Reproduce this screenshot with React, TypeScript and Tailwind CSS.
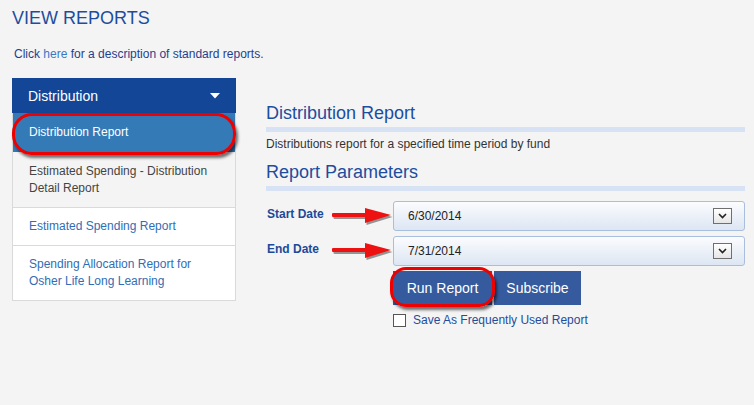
import { useState } from 'react';

const items = [
  { label: 'Estimated Spending - Distribution Detail Report', tone: 'gray' },
  { label: 'Estimated Spending Report', tone: 'link' },
  { label: 'Spending Allocation Report for Osher Life Long Learning', tone: 'link' },
];

function RedArrow() {
  return (
    <svg width="62" height="20" viewBox="0 0 62 20" className="overflow-visible">
      <g transform="translate(1.5,2)" fill="#222" opacity="0.45">
        <rect x="1" y="7" width="37" height="4" rx="1" />
        <polygon points="34,2 60,9 34,17" />
      </g>
      <rect x="1" y="7" width="37" height="4" rx="1" fill="#ee1111" />
      <polygon points="34,2 60,9 34,17" fill="#ee1111" />
    </svg>
  );
}

function DateSelect({ value }: { value: string }) {
  return (
    <div className="flex-1 h-[30px] flex items-center justify-between rounded-[3px] border border-[#a9bedc] bg-gradient-to-b from-[#fbfcfe] to-[#dde6f3] pl-[14px] pr-[12px]">
      <span className="text-[12px] text-[#222]">{value}</span>
      <span className="w-[19px] h-[16px] flex items-center justify-center border border-[#6f6f6f] bg-gradient-to-b from-white to-[#e6e6e6]">
        <svg width="9" height="6" viewBox="0 0 9 6">
          <path d="M1 1 L4.5 4.5 L8 1" fill="none" stroke="#222" strokeWidth="1.6" />
        </svg>
      </span>
    </div>
  );
}

export default function App() {
  const [saved, setSaved] = useState(false);

  return (
    <div className="w-[754px] h-[405px] bg-[#f4f4f4] font-['Liberation_Sans',Arial,sans-serif] overflow-hidden">
      <h1 className="pt-[8px] pl-[12px] text-[18px] leading-[21px] text-[#1d4d9e]">VIEW REPORTS</h1>
      <p className="mt-[18px] pl-[14px] text-[12px] leading-[14px] text-[#1f3f8c]">
        Click <span className="text-[#3b78c4]">here</span> for a description of standard reports.
      </p>

      <div className="flex items-start mt-[17px]">
        {/* left menu */}
        <div className="ml-[12px] w-[224px] border border-[#dadada] bg-white">
          <div className="h-[35px] -mx-px -mt-px flex items-center justify-between bg-[#134697] pl-[16px] pr-[16px]">
            <span className="text-[14px] leading-[16px] text-white">Distribution</span>
            <svg width="10" height="6" viewBox="0 0 10 6">
              <polygon points="0,0 10,0 5,5.5" fill="#fff" />
            </svg>
          </div>
          <div className="relative">
            <div className="bg-[#337ab7] px-[16px] py-[11px] text-[12px] leading-[17px] text-white">
              Distribution Report
            </div>
            <div className="absolute -left-px -right-px top-0 -bottom-[3px] rounded-[20px] border-[3px] border-[#ee0000] shadow-[2px_3px_3px_rgba(0,0,0,0.55)]" />
          </div>
          {items.map((it, i) => (
            <div
              key={it.label}
              className={
                (i > 0 ? 'border-t border-[#dadada] pt-[10px] ' : 'pt-[11px] ') +
                (it.tone === 'gray' ? 'bg-[#f4f4f4] text-[#444] ' : 'bg-white text-[#2f6eb6] ') +
                'px-[16px] pb-[10px] text-[12px] leading-[17px]'
              }
            >
              {it.label}
            </div>
          ))}
        </div>

        {/* right content */}
        <div className="ml-[30px] mt-[25px] w-[479px] flex flex-col">
          <h2 className="text-[18px] leading-[21px] text-[#1d4d9e]">Distribution Report</h2>
          <div className="mt-[3px] h-[5px] bg-[#d7e3f4]" />
          <p className="mt-[5px] text-[12px] leading-[14px] text-[#333]">
            Distributions report for a specified time period by fund
          </p>
          <h2 className="mt-[11px] text-[18px] leading-[21px] text-[#1d4d9e]">Report Parameters</h2>
          <div className="mt-[3px] h-[5px] bg-[#d7e3f4]" />

          <div className="mt-[10px] flex items-center">
            <div className="w-[127px] flex items-center justify-between pl-px">
              <span className="-mt-[4px] text-[12px] font-bold text-[#1c4a98]">Start Date</span>
              <RedArrow />
            </div>
            <DateSelect value="6/30/2014" />
          </div>
          <div className="mt-[5px] flex items-center">
            <div className="w-[127px] flex items-center justify-between pl-px">
              <span className="-mt-[4px] text-[12px] font-bold text-[#1c4a98]">End Date</span>
              <RedArrow />
            </div>
            <DateSelect value="7/31/2014" />
          </div>

          <div className="mt-[5px] ml-[127px] flex gap-[2px]">
            <div className="relative">
              <button className="w-[99px] h-[34px] bg-[#355b9e] text-[14px] text-white">Run Report</button>
              <div className="absolute -left-[3px] -right-[3px] -top-[4px] -bottom-[2px] rounded-[16px] border-[3px] border-[#ee0000] shadow-[2px_3px_3px_rgba(0,0,0,0.55)]" />
            </div>
            <button className="w-[87px] h-[34px] bg-[#355b9e] text-[14px] text-white">Subscribe</button>
          </div>

          <label className="mt-[8px] ml-[127px] flex items-center gap-[7px] cursor-pointer">
            <span
              onClick={() => setSaved(!saved)}
              className="w-[13px] h-[13px] border border-[#555] bg-white flex items-center justify-center text-[10px] leading-none"
            >
              {saved ? '✓' : ''}
            </span>
            <span className="text-[12px] leading-[14px] text-[#1f4d9e]">Save As Frequently Used Report</span>
          </label>
        </div>
      </div>
    </div>
  );
}
